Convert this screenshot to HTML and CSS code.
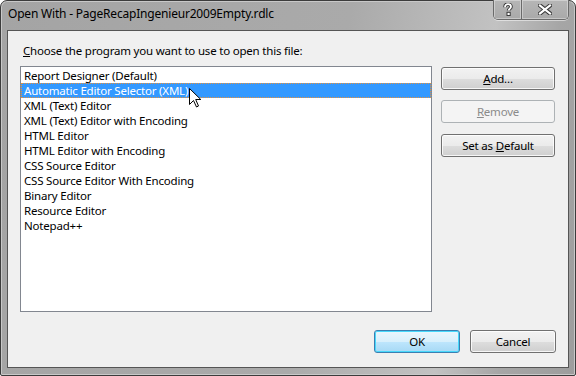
FILE: index.html
```html
<!DOCTYPE html>
<html lang="en">
<head>
    <meta charset="UTF-8">
    <title>Open With</title>
    <link rel="stylesheet" href="styles.css">
</head>
<body>
    <div class="window">
        <div class="titlebar">
            <span class="title">Open With - PageRecapIngenieur2009Empty.rdlc</span>
            <div class="caption-buttons">
                <div class="cap-btn help">
                    <svg width="10" height="13" viewBox="0 0 10 13">
                        <path d="M2 4.2 C2 2 3.4 1.2 5 1.2 C6.8 1.2 8 2.2 8 3.7 C8 5.4 5.6 5.8 5.6 7.6" fill="none" stroke="#3a3a3a" stroke-width="3.6"/>
                        <path d="M2 4.2 C2 2 3.4 1.2 5 1.2 C6.8 1.2 8 2.2 8 3.7 C8 5.4 5.6 5.8 5.6 7.6" fill="none" stroke="#fff" stroke-width="1.8"/>
                        <rect x="4" y="9.3" width="3.2" height="3.2" fill="#fff" stroke="#3a3a3a" stroke-width="1"/>
                    </svg>
                </div>
                <div class="cap-btn close">
                    <svg width="14" height="11" viewBox="0 0 14 11">
                        <path d="M2 1.5 L12 9.5 M12 1.5 L2 9.5" stroke="#3a3a3a" stroke-width="4.2" stroke-linecap="square"/>
                        <path d="M2 1.5 L12 9.5 M12 1.5 L2 9.5" stroke="#fff" stroke-width="2.2" stroke-linecap="square"/>
                    </svg>
                </div>
            </div>
        </div>

        <div class="client">
            <p class="prompt"><u>C</u>hoose the program you want to use to open this file:</p>

            <div class="main-row">
                <div class="listbox">
                    <div class="item">Report Designer (Default)</div>
                    <div class="item selected">Automatic Editor Selector (XML)</div>
                    <div class="item">XML (Text) Editor</div>
                    <div class="item">XML (Text) Editor with Encoding</div>
                    <div class="item">HTML Editor</div>
                    <div class="item">HTML Editor with Encoding</div>
                    <div class="item">CSS Source Editor</div>
                    <div class="item">CSS Source Editor With Encoding</div>
                    <div class="item">Binary Editor</div>
                    <div class="item">Resource Editor</div>
                    <div class="item">Notepad++</div>

                    <svg class="cursor" width="13" height="20" viewBox="0 0 13 20">
                        <path d="M0.5 0.5 L0.5 16.5 L4.5 12.5 L7.5 19 L9.5 18 L6.7 11.5 L11.8 11.5 Z" fill="#fff" stroke="#000" stroke-width="1" stroke-linejoin="miter"/>
                    </svg>
                </div>

                <div class="side-buttons">
                    <button class="btn"><u>A</u>dd...</button>
                    <button class="btn" disabled><u>R</u>emove</button>
                    <button class="btn">Set as <u>D</u>efault</button>
                </div>
            </div>

            <div class="footer">
                <button class="btn small default">OK</button>
                <button class="btn small">Cancel</button>
            </div>
        </div>
    </div>
</body>
</html>
```

FILE: styles.css
```css
* {
    margin: 0;
    padding: 0;
    box-sizing: border-box;
}
body {
    background-color: #ffffff;
    font-family: 'Segoe UI', 'Noto Sans', 'Open Sans', sans-serif;
    font-size: 11.5px;
    letter-spacing: -0.2px;
    color: #000;
}
.window {
    width: 576px;
    height: 376px;
    display: flex;
    flex-direction: column;
    border: 1px solid #3c3c3c;
    border-radius: 7px 7px 2px 2px;
    background: linear-gradient(100deg, #a4a4a4 0%, #aaaaaa 55%, #c2c2c2 78%, #a6a6a6 88%, #9d9d9d 100%);
    box-shadow: inset 0 0 0 1px #c8c8c8;
}
.titlebar {
    height: 29px;
    display: flex;
    align-items: flex-start;
    padding-left: 7px;
}
.title {
    margin-top: 5px;
    line-height: 16px;
    font-size: 12px;
    color: #000;
}
.caption-buttons {
    margin-left: auto;
    margin-right: 6px;
    display: flex;
    height: 20px;
    margin-top: -1px;
    border: 1px solid #6a6a6a;
    border-top: none;
    border-radius: 0 0 5px 5px;
    overflow: hidden;
    box-shadow: 0 1px 0 rgba(255,255,255,0.5);
}
.cap-btn {
    display: flex;
    align-items: center;
    justify-content: center;
    height: 100%;
    background: linear-gradient(#b6b6b6, #a9a9a9);
    box-shadow: inset 0 0 0 1px rgba(255,255,255,0.35);
}
.help {
    width: 28px;
    border-right: 1px solid #6a6a6a;
}
.close {
    width: 46px;
}
.client {
    flex: 1;
    margin: 0 6px 7px 6px;
    background-color: #f0f0f0;
    border: 1px solid #555;
    padding: 12px 12px 14px 12px;
    display: flex;
    flex-direction: column;
}
.prompt {
    margin-left: 3px;
    line-height: 15px;
    margin-bottom: 8px;
}
.main-row {
    display: flex;
    align-items: flex-start;
}
.listbox {
    position: relative;
    width: 412px;
    height: 246px;
    background: #fff;
    border: 1px solid #828790;
    padding-top: 1px;
}
.item {
    height: 15px;
    line-height: 15px;
    padding-left: 3px;
    white-space: nowrap;
    overflow: hidden;
}
.item.selected {
    background-color: #3399ff;
    color: #fff;
    outline: 1px dotted #e8913a;
    outline-offset: -1px;
}
.cursor {
    position: absolute;
    left: 168px;
    top: 21px;
}
.side-buttons {
    margin-left: 9px;
    margin-top: 1px;
    display: flex;
    flex-direction: column;
    gap: 10px;
}
.btn {
    width: 114px;
    height: 23px;
    font-family: inherit;
    font-size: 11.5px;
    letter-spacing: -0.2px;
    color: #000;
    border: 1px solid #707070;
    border-radius: 3px;
    background: linear-gradient(#f2f2f2 0%, #ebebeb 50%, #dddddd 51%, #cfcfcf 100%);
    box-shadow: inset 0 0 0 1px rgba(255,255,255,0.8);
}
.btn:disabled {
    color: #8b8b8b;
    border-color: #adb2b5;
    background: #f4f4f4;
    box-shadow: none;
}
.btn:last-child {
    margin-top: 1px;
}
.footer {
    margin-top: auto;
    display: flex;
    justify-content: flex-end;
    gap: 10px;
}
.btn.small {
    width: 86px;
    margin-top: 0;
}
.btn.default {
    border-color: #3c7fb1;
    background: linear-gradient(#eaf6fd 0%, #d9f0fc 50%, #bee6fd 51%, #a7d9f5 100%);
    box-shadow: inset 0 0 0 1px #48d8fb;
}
```
